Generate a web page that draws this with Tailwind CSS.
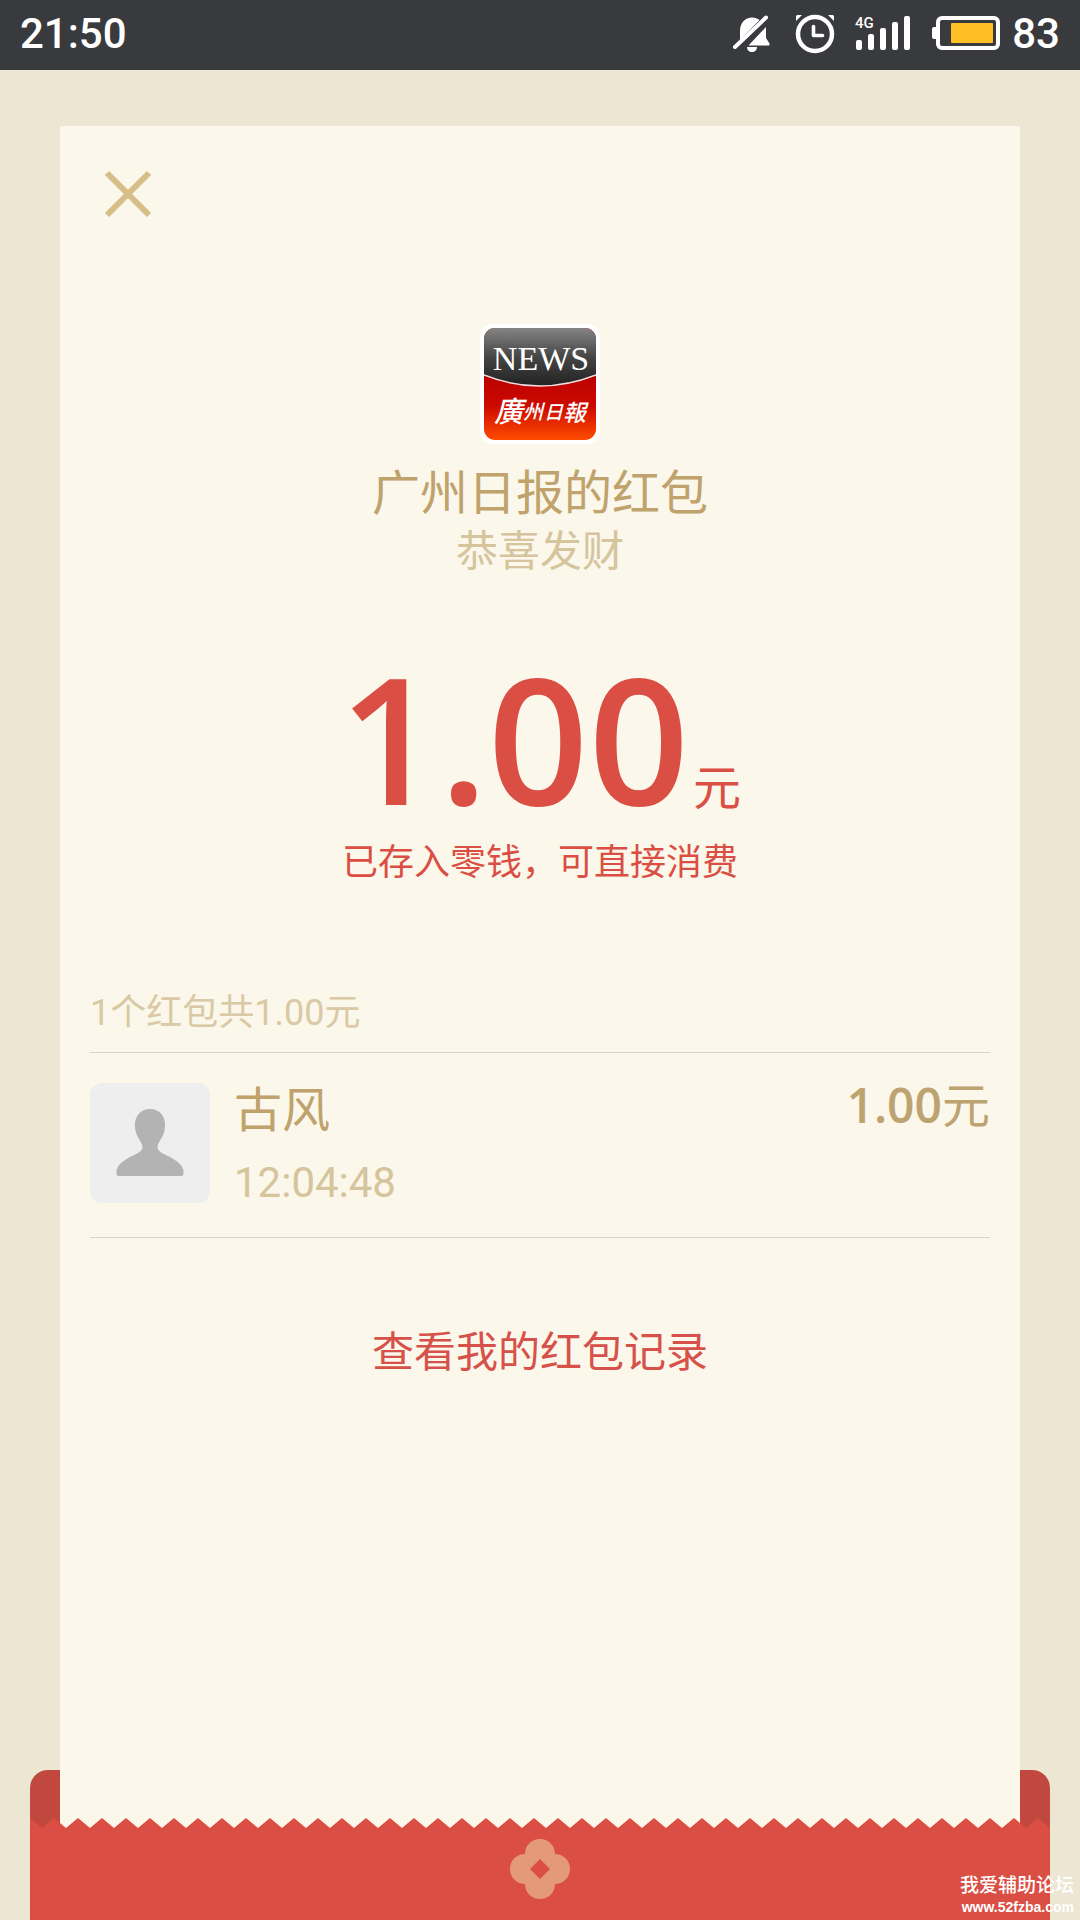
<!DOCTYPE html>
<html lang="zh-CN">
<head>
<meta charset="utf-8">
<meta name="viewport" content="width=device-width, initial-scale=1">
<title>红包详情</title>
<script src="https://cdn.jsdelivr.net/npm/@tailwindcss/browser@4"></script>
</head>
<body class="flex min-h-screen flex-col bg-[#ece6d3] font-[Roboto,'Noto_Sans_CJK_SC',sans-serif]">
  <header class="flex h-[70px] items-center justify-between bg-[#393a3e] px-5 pb-0.5 text-[42px] leading-none font-medium text-white">
    <time>21:50</time>
    <div class="flex items-center">
      <svg class="mr-6 h-10 w-10" viewBox="0 0 40 40" aria-label="静音">
        <path fill="#fff" d="M9 26V17C9 9 14 3.500 21 3.500c3 0 5.500 1 7.500 2.500zM35 13v11l3.500 5.500a1.500 1.500 0 0 1-1.500 2H17.500zM16 33h10c0 3-2.200 5-5 5s-5-2-5-5z"/>
        <path stroke="#fff" stroke-width="4" stroke-linecap="round" d="M4 33 35 3.500"/>
      </svg>
      <svg class="mr-5 h-10 w-10" viewBox="0 0 40 40" fill="none" stroke="#fff" aria-label="闹钟">
        <circle cx="20" cy="20" r="17" stroke-width="4.500"/>
        <path stroke-width="3.600" stroke-linecap="round" stroke-linejoin="round" d="M18.500 12.500V21.500H27.500"/>
        <path stroke="none" fill="#fff" d="M1 7V2.500Q1 1 2.500 1H7zM39 7V2.500Q39 1 37.500 1H33z"/>
      </svg>
      <svg class="mr-5 h-10 w-14" viewBox="0 0 56 40" fill="#fff" aria-label="4G信号">
        <text x="0" y="14" font-family="Roboto, sans-serif" font-size="15" font-weight="500">4G</text>
        <rect x="1" y="26" width="6" height="10" rx="2"/><rect x="13" y="20" width="6" height="16" rx="2"/><rect x="25" y="14" width="6" height="22" rx="2"/><rect x="37" y="8" width="6" height="28" rx="2"/><rect x="49" y="2" width="6" height="34" rx="2"/>
      </svg>
      <svg class="mr-[11px] h-10 w-[70px]" viewBox="0 0 70 40" aria-label="电量">
        <rect x="7" y="4" width="60" height="30" rx="4" fill="none" stroke="#fff" stroke-width="4"/>
        <path fill="#fff" d="M5 13v12H3q-2 0-2-2v-8q0-2 2-2z"/>
        <rect x="20" y="9" width="42" height="20" rx="1" fill="#ffbd26"/>
      </svg>
      <span>83</span>
    </div>
  </header>

  <main class="relative flex flex-1 flex-col px-[60px] pt-14">
    <div class="absolute inset-x-[30px] bottom-0 h-[150px] rounded-t-[18px] bg-[#c0483e]"></div>

    <section class="relative flex flex-1 flex-col bg-[#fbf7ea] px-[30px] pt-11">
      <button type="button" aria-label="关闭" class="ml-3.5 h-12 w-12">
        <svg class="h-12 w-12" viewBox="0 0 48 48" stroke="#d7bd88" stroke-width="6"><path d="M3 3 45 45M45 3 3 45"/></svg>
      </button>

      <div class="mt-[105px] flex flex-col items-center">
        <svg class="h-[122px] w-[122px]" viewBox="0 0 122 122" role="img" aria-label="广州日报">
          <defs>
            <linearGradient id="steel" x1="0" y1="0" x2="0" y2="1"><stop offset="0" stop-color="#858585"/><stop offset=".5" stop-color="#454545"/><stop offset="1" stop-color="#222"/></linearGradient>
            <linearGradient id="ember" x1="0" y1="0" x2="0" y2="1"><stop offset=".4" stop-color="#b80000"/><stop offset=".7" stop-color="#cc0a00"/><stop offset="1" stop-color="#ff4c00"/></linearGradient>
            <clipPath id="tile"><rect x="5" y="5" width="112" height="112" rx="11"/></clipPath>
          </defs>
          <rect x="1" y="1" width="120" height="120" rx="12" fill="#fff"/>
          <g clip-path="url(#tile)">
            <rect x="5" y="5" width="112" height="112" fill="url(#ember)"/>
            <path d="M5 5H117V52Q61 74 5 52z" fill="url(#steel)"/>
            <path d="M5 52Q61 74 117 52" fill="none" stroke="#f6dcdc" stroke-width="1.500"/>
          </g>
          <text x="62" y="47" fill="#fff" font-family="Liberation Serif, serif" font-size="34" text-anchor="middle">NEWS</text>
          <g fill="#fff" font-family="Noto Sans CJK TC, sans-serif" font-style="italic" font-weight="500">
            <text x="15" y="99" font-size="29">廣</text><text x="44" y="96" font-size="20">州</text><text x="65" y="96" font-size="19">日</text><text x="84" y="98" font-size="23">報</text>
          </g>
        </svg>
        <h1 class="mt-[21px] text-5xl leading-[56px] text-[#bfa26c]">广州日报的红包</h1>
        <p class="text-[42px] leading-[60px] text-[#d5c49c]">恭喜发财</p>
        <p class="mt-[65px] flex items-baseline gap-1 text-[#da4e43]">
          <span class="font-['Open_Sans'] text-[176px] leading-[180px] font-semibold">1.00</span><span class="text-5xl">元</span>
        </p>
        <p class="mt-3 text-4xl leading-[48px] text-[#da4e43]">已存入零钱，可直接消费</p>
      </div>

      <h2 class="mt-[102px] border-b border-[#d9d4c6] pb-[15px] text-4xl leading-[48px] text-[#d9c9a4]">1个红包共1.00元</h2>
      <ul>
        <li class="flex gap-6 border-b border-[#d9d4c6] pt-[30px] pb-6">
          <svg class="h-[120px] w-[120px] rounded-xl bg-[#eee]" viewBox="0 0 120 120" role="img" aria-label="头像">
            <path fill="#b3b3b3" d="M60 26C50 26 44 34 45 44C45.500 54 52 58 52.500 64C52.500 68 48 70 42 73C34 77 27 82 26.500 88V91Q26.500 93 29 93H91Q93.500 93 93.500 91V88C93 82 86 77 78 73C72 70 67.500 68 67.500 64C68 58 74.500 54 75 44C76 34 70 26 60 26z"/>
          </svg>
          <div class="flex-1">
            <p class="text-5xl leading-[56px] text-[#bfa26c]">古风</p>
            <time class="mt-3.5 block text-[42px] leading-[60px] text-[#d5c49c]">12:04:48</time>
          </div>
          <p class="text-5xl leading-[44px] text-[#bda36f]"><span class="font-['Open_Sans'] font-semibold">1.00</span>元</p>
        </li>
      </ul>
      <a href="#" class="mt-[85px] self-center text-[42px] leading-[60px] text-[#d6514a]">查看我的红包记录</a>
    </section>

    <footer class="relative -mx-[30px] -mt-3 h-[102px]">
      <svg class="absolute inset-0 h-full w-full" aria-hidden="true">
        <defs><pattern id="teeth" width="24" height="10" patternUnits="userSpaceOnUse"><path fill="#da4e43" d="M0 0 12 10 24 0V11H0z"/></pattern></defs>
        <rect width="100%" height="10" fill="url(#teeth)"/>
        <rect y="10" width="100%" height="92" fill="#da4e43"/>
      </svg>
      <svg class="relative mx-auto mt-5 h-[62px] w-[62px]" viewBox="0 0 62 62" aria-hidden="true">
        <path fill="#e59a77" fill-rule="evenodd" d="M16 16C16 7 23 1 31 1S46 7 46 16C55 16 61 23 61 31S55 46 46 46C46 55 39 61 31 61S16 55 16 46C7 46 1 39 1 31S7 16 16 16zM31 21 21 31 31 41 41 31z"/>
      </svg>
    </footer>
    <p class="absolute right-[6px] bottom-1 flex flex-col items-end text-[19px] leading-6 font-medium text-white">
      <span>我爱辅助论坛</span>
      <span class="font-['Liberation_Sans'] text-[14px] leading-[18px] font-bold">www.52fzba.com</span>
    </p>
  </main>
</body>
</html>
